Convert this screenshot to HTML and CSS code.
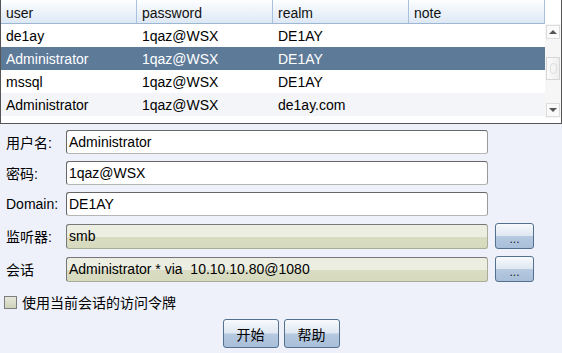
FILE: index.html
```html
<!DOCTYPE html>
<html lang="zh-CN">
<head>
  <meta charset="UTF-8" />
  <title>Make Token</title>
  <link rel="stylesheet" href="styles.css">
</head>
<body>

  <div class="table-wrap">
    <div class="grid">
      <div class="row head">
        <div class="cell">user</div>
        <div class="cell">password</div>
        <div class="cell">realm</div>
        <div class="cell">note</div>
      </div>
      <div class="row">
        <div class="cell">de1ay</div>
        <div class="cell">1qaz@WSX</div>
        <div class="cell">DE1AY</div>
        <div class="cell"></div>
      </div>
      <div class="row selected">
        <div class="cell">Administrator</div>
        <div class="cell">1qaz@WSX</div>
        <div class="cell">DE1AY</div>
        <div class="cell"></div>
      </div>
      <div class="row">
        <div class="cell">mssql</div>
        <div class="cell">1qaz@WSX</div>
        <div class="cell">DE1AY</div>
        <div class="cell"></div>
      </div>
      <div class="row alt">
        <div class="cell">Administrator</div>
        <div class="cell">1qaz@WSX</div>
        <div class="cell">de1ay.com</div>
        <div class="cell"></div>
      </div>
    </div>
    <div class="side">
      <div class="scrollbar">
        <div class="sb-btn"><span class="arrow up"></span></div>
        <div class="sb-track"><div class="thumb"><span class="grip"></span></div></div>
        <div class="sb-btn"><span class="arrow down"></span></div>
      </div>
    </div>
  </div>

  <div class="form">
    <div class="field">
      <label>用户名:</label>
      <div class="input">Administrator</div>
    </div>
    <div class="field">
      <label>密码:</label>
      <div class="input">1qaz@WSX</div>
    </div>
    <div class="field">
      <label>Domain:</label>
      <div class="input">DE1AY</div>
    </div>
    <div class="field tall">
      <label>监听器:</label>
      <div class="input locked">smb</div>
      <button class="more">...</button>
    </div>
    <div class="field tall">
      <label>会话</label>
      <div class="input locked">Administrator * via &nbsp;10.10.10.80@1080</div>
      <button class="more">...</button>
    </div>

    <div class="check">
      <span class="box"></span>
      <span>使用当前会话的访问令牌</span>
    </div>

    <div class="actions">
      <button class="btn">开始</button>
      <button class="btn">帮助</button>
    </div>
  </div>

</body>
</html>
```

FILE: styles.css
```css
* {
  box-sizing: border-box;
}

body {
  margin: 0;
  background: #eef1fa;
  font-family: 'Liberation Sans', 'Noto Sans CJK SC', sans-serif;
  font-size: 14px;
  color: #000;
}

/* table */
.table-wrap {
  display: flex;
  height: 124px;
  background: #fff;
  border: 1px solid #555;
  border-top: none;
}

.grid {
  width: 544px;
}

.row {
  display: flex;
  height: 23px;
}

.cell {
  width: 136px;
  padding: 2px 0 0 5px;
  line-height: 21px;
  white-space: nowrap;
}

.row.head {
  height: 24px;
  background: linear-gradient(#fdfeff, #dde8f5);
  border-bottom: 1px solid #9db6d2;
}

.row.head .cell {
  padding-top: 3px;
  border-right: 1px solid #a9c1db;
  color: #111;
}

.row.selected {
  background: #5d7a99;
  color: #fff;
}

.row.alt {
  background: #f4f5f8;
}

.side {
  width: 16px;
  padding-top: 24px;
}

.scrollbar {
  height: 94px;
  display: flex;
  flex-direction: column;
  background: #f6f6f6;
}

.sb-btn {
  height: 14px;
  margin: 1px;
  border: 1px solid #dcdcdc;
  background: #fafafa;
  display: flex;
  align-items: center;
  justify-content: center;
}

.sb-track {
  flex: 1;
  padding-top: 17px;
}

.thumb {
  height: 23px;
  margin: 0 1px;
  border: 1px solid #d6d6d6;
  background: linear-gradient(90deg, #fbfbfb, #eeeeee);
  display: flex;
  align-items: center;
  justify-content: center;
}

.grip {
  width: 7px;
  height: 11px;
  border: 1px solid #dedede;
  border-radius: 4px;
}

.arrow {
  width: 0;
  height: 0;
  border-left: 4px solid transparent;
  border-right: 4px solid transparent;
}

.arrow.up {
  border-bottom: 4px solid #555;
}

.arrow.down {
  border-top: 4px solid #555;
}

/* form */
.form {
  padding: 6px 0 0 6px;
}

.field {
  display: flex;
  align-items: center;
  height: 24px;
  margin-bottom: 7px;
}

.field.tall {
  height: 26px;
}

label {
  width: 60px;
  white-space: nowrap;
}

.input {
  width: 422px;
  height: 24px;
  line-height: 22px;
  padding-left: 2px;
  background: #fff;
  border: 1px solid #666;
  border-bottom-color: #b5b5b5;
  border-right-color: #9a9a9a;
  border-radius: 3px;
  white-space: nowrap;
}

.input.locked {
  height: 25px;
  background: linear-gradient(#eceee2 0%, #eceee2 50%, #d9dcc2 52%, #d6dabd 100%);
  border-color: #777 #a9ad98 #a9ad98 #777;
}

.more {
  width: 39px;
  height: 26px;
  margin-left: 7px;
  padding: 6px 0 0;
  font-family: 'Liberation Sans', sans-serif;
  font-size: 12px;
  color: #222;
  border: 1px solid #53708f;
  border-radius: 3px;
  background: linear-gradient(#f8fafd 0%, #dfe7f1 48%, #b5c9e0 52%, #a9bfd9 100%);
}

.check {
  display: flex;
  align-items: center;
  height: 18px;
  margin-top: 11px;
  margin-left: -2px;
  gap: 5px;
}

.box {
  width: 13px;
  height: 13px;
  border: 1px solid #7d7d7d;
  background: linear-gradient(#e6e8da, #cfd3ba);
}

.actions {
  display: flex;
  justify-content: center;
  gap: 5px;
  margin: 8px 0 0 -6px;
}

.btn {
  width: 56px;
  height: 29px;
  padding: 0;
  font-family: 'Liberation Sans', 'Noto Sans CJK SC', sans-serif;
  font-size: 14px;
  color: #000;
  border: 1px solid #53708f;
  border-radius: 3px;
  background: linear-gradient(#f8fafd 0%, #dfe7f1 48%, #b5c9e0 52%, #a9bfd9 100%);
}
```
